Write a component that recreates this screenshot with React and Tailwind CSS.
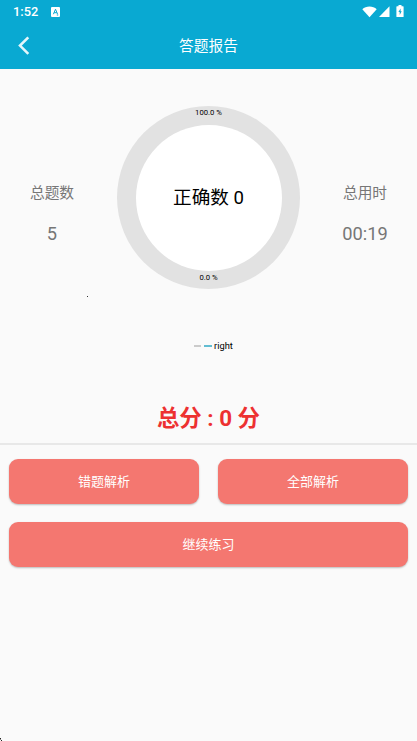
import React from "react";

function StatusBar() {
  return (
    <div className="flex h-[23px] items-center pl-[13px] pr-[13px]">
      <span className="w-[26px] whitespace-nowrap text-[12.8px] font-medium leading-[23px]">1:52</span>
      <svg className="ml-[12px]" width="9" height="10" viewBox="0 0 9 10">
        <rect width="9" height="10" rx="1" fill="#fff" />
        <path d="M2.4 7.2 4.5 2.2 6.6 7.2M3.1 5.7h2.8M5.8 8h1.4" fill="none" stroke="#09a9d2" strokeWidth="1" />
      </svg>
      <svg className="ml-auto" width="15" height="12" viewBox="0 0 15 12">
        <path d="M0.3 3.2C4 -.3 11 -.3 14.7 3.2L7.5 11.2Z" fill="#fff" />
      </svg>
      <svg className="ml-[2px]" width="11" height="12" viewBox="0 0 11 12">
        <path d="M10.5 0.3V11H0Z" fill="#fff" />
      </svg>
      <svg className="ml-[6px]" width="8" height="13" viewBox="0 0 8 13">
        <path d="M2.5 0h3v1.2H7a.6.6 0 0 1 .6.6v9.6a.6.6 0 0 1-.6.6H1a.6.6 0 0 1-.6-.6V1.8a.6.6 0 0 1 .6-.6h1.5Z" fill="#fff" />
        <path d="M4.6 3.5 2.4 7.1h1.3v2.8L5.7 6.3H4.6Z" fill="#09a9d2" />
      </svg>
    </div>
  );
}

function Stat({ label, value }) {
  return (
    <div className="flex w-[104px] flex-col items-center pt-[75.5px] text-[#767676]">
      <span className="text-[14.7px] leading-[22px]">{label}</span>
      <span className="mt-[19.5px] text-[18.3px] leading-[22px]">{value}</span>
    </div>
  );
}

function ActionButton({ children }) {
  return (
    <button className="flex h-[44.5px] flex-1 items-center justify-center rounded-[9px] bg-[#f47770] text-[13px] text-white shadow-[0_1px_2px_rgba(0,0,0,0.25)]">
      {children}
    </button>
  );
}

export default function App() {
  return (
    <div className="relative flex h-[741px] w-[417px] flex-col overflow-hidden bg-[#fafafa] font-[Roboto,'Noto_Sans_CJK_SC',sans-serif]">
      <header className="h-[68.5px] shrink-0 bg-[#09a9d2] text-white">
        <StatusBar />
        <div className="grid h-[45px] grid-cols-[40px_1fr_40px] items-center">
          <svg className="ml-[17px]" width="13" height="20" viewBox="0 0 13 20">
            <path d="M11.3 1.3 3 9.6l8.3 8.3" fill="none" stroke="#e4f6fb" strokeWidth="2.6" />
          </svg>
          <h1 className="text-center text-[14.7px] leading-[22px]">答题报告</h1>
        </div>
      </header>

      <section className="flex h-[334px] shrink-0 flex-col pt-[37.5px]">
        <div className="flex justify-between">
          <Stat label="总题数" value="5" />
          <div className="flex size-[183px] flex-col items-center rounded-full bg-[#e2e2e2] text-[7.7px] leading-[8px] text-black">
            <span className="flex h-[18.5px] items-center pb-[5px]">100.0 %</span>
            <div className="flex size-[146px] shrink-0 items-center justify-center rounded-full bg-white text-[18.6px] leading-[24px]">
              正确数 0
            </div>
            <span className="flex h-[18.5px] items-center pb-[4px]">0.0 %</span>
          </div>
          <Stat label="总用时" value="00:19" />
        </div>
        <span className="ml-[87px] mt-[6.5px] size-px bg-[#333333]" />
        <div className="mt-[43.5px] flex h-[12px] items-center pl-[194px] text-[9.3px] text-black">
          <span className="h-[2px] w-[7px] bg-[#cbcbcb]" />
          <span className="ml-[3px] h-[2px] w-[8px] bg-[#62bdd2]" />
          <span className="ml-[2px]">right</span>
        </div>
      </section>

      <div className="flex h-[42px] shrink-0 items-start justify-center border-b-2 border-[#e8e8e8] text-[22.4px] font-bold leading-[30px] text-[#ed3131]">
        <span className="whitespace-pre">总分 : 0 分</span>
      </div>

      <div className="flex flex-col gap-[18.5px] px-[9px] pt-[14.5px]">
        <div className="flex gap-[19px]">
          <ActionButton>错题解析</ActionButton>
          <ActionButton>全部解析</ActionButton>
        </div>
        <div className="flex">
          <ActionButton>继续练习</ActionButton>
        </div>
      </div>

      <svg className="mt-auto" width="3" height="3" viewBox="0 0 3 3">
        <path d="M0 0h1v1H0zM1 2h1v1H1z" fill="#222" />
        <path d="M0 1h1v1H0z" fill="#888" />
      </svg>
    </div>
  );
}
